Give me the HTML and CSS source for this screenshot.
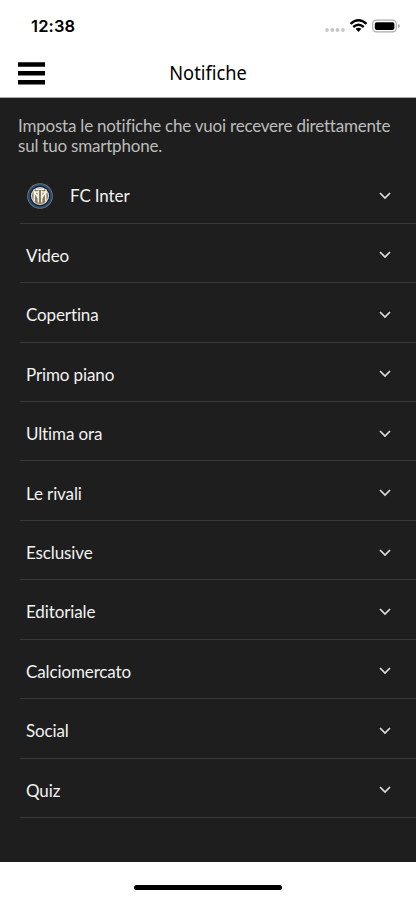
FILE: index.html
```html
<!DOCTYPE html>
<html lang="it">
<head>
<meta charset="utf-8">
<meta name="viewport" content="width=device-width">
<title>Notifiche</title>
<link rel="stylesheet" href="styles.css">
</head>
<body>
<div class="status">
  <span class="time">12:38</span>
  <svg class="indicators" width="78" height="16" viewBox="0 0 78 16">
    <g fill="#c7c7c7"><circle cx="4" cy="12" r="1.9"/><circle cx="9.3" cy="12" r="1.9"/><circle cx="14.6" cy="12" r="1.9"/><circle cx="19.9" cy="12" r="1.9"/></g>
    <g fill="none" stroke="#000" stroke-width="2.4"><path d="M27.5 5.8Q35.5-1.2 43.5 5.8"/><path d="M30.2 9Q35.5 4.6 40.8 9"/></g>
    <path d="M32.6 10.8Q35.5 8.8 38.4 10.8L35.5 13.9Z"/>
    <rect x="49.7" y="2.2" width="23.6" height="11.6" rx="3.6" fill="#fff" stroke="#aaa" stroke-width="1.2"/>
    <rect x="51.8" y="4.2" width="19.6" height="7.7" rx="1.8"/>
    <path d="M75 6Q77 6.5 77 8T75 10Z" fill="#aaa"/>
  </svg>
</div>
<header class="bar">
  <svg class="menu" width="27" height="23" viewBox="0 0 27 23"><path d="M0 .2h27v4.5H0zM0 9.1h27v4.5H0zM0 18h27v4.5H0z"/></svg>
  <h1>Notifiche</h1>
</header>
<main>
  <p class="intro">Imposta le notifiche che vuoi recevere direttamente<br>sul tuo smartphone.</p>
  <ul>
    <li>
      <svg class="crest" width="26" height="26" viewBox="0 0 26 26">
        <circle cx="13" cy="13" r="12.8" fill="#817b6d"/><circle cx="13" cy="13" r="12.1" fill="#294f7d"/>
        <circle cx="13" cy="13" r="10.3" fill="#151d29"/><circle cx="13" cy="13" r="9" fill="#eee9dc"/>
        <circle cx="13" cy="13" r="8" fill="#84755a"/>
        <path d="M7.3 18.5V8.5l4.2 7M18.7 18.5V8.5l-4.2 7M11.3 7.5v12M14.7 7.5v12M6.5 9h5M15 9h5M9 6.3h8" fill="none" stroke="#f4f0e6" stroke-width="1.5"/>
      </svg>
      <span>FC Inter</span><svg class="chev" width="12" height="8" viewBox="0 0 12 8"><path d="M1 1l5 5 5-5"/></svg></li>
    <li><span>Video</span><svg class="chev" width="12" height="8" viewBox="0 0 12 8"><path d="M1 1l5 5 5-5"/></svg></li>
    <li><span>Copertina</span><svg class="chev" width="12" height="8" viewBox="0 0 12 8"><path d="M1 1l5 5 5-5"/></svg></li>
    <li><span>Primo piano</span><svg class="chev" width="12" height="8" viewBox="0 0 12 8"><path d="M1 1l5 5 5-5"/></svg></li>
    <li><span>Ultima ora</span><svg class="chev" width="12" height="8" viewBox="0 0 12 8"><path d="M1 1l5 5 5-5"/></svg></li>
    <li><span>Le rivali</span><svg class="chev" width="12" height="8" viewBox="0 0 12 8"><path d="M1 1l5 5 5-5"/></svg></li>
    <li><span>Esclusive</span><svg class="chev" width="12" height="8" viewBox="0 0 12 8"><path d="M1 1l5 5 5-5"/></svg></li>
    <li><span>Editoriale</span><svg class="chev" width="12" height="8" viewBox="0 0 12 8"><path d="M1 1l5 5 5-5"/></svg></li>
    <li><span>Calciomercato</span><svg class="chev" width="12" height="8" viewBox="0 0 12 8"><path d="M1 1l5 5 5-5"/></svg></li>
    <li><span>Social</span><svg class="chev" width="12" height="8" viewBox="0 0 12 8"><path d="M1 1l5 5 5-5"/></svg></li>
    <li><span>Quiz</span><svg class="chev" width="12" height="8" viewBox="0 0 12 8"><path d="M1 1l5 5 5-5"/></svg></li>
  </ul>
</main>
<footer><div class="home"></div></footer>
</body>
</html>
```
FILE: styles.css
```css
* { box-sizing: border-box; margin: 0; padding: 0; }
body {
  width: 416px;
  height: 900px;
  display: flex;
  flex-direction: column;
  overflow: hidden;
  background: #fff;
  font-family: Lato, sans-serif;
}
svg { display: block; flex: none; }
.status {
  height: 49px;
  padding: 3px 15px 0 31px;
  display: flex;
  align-items: center;
  justify-content: space-between;
}
.time { font: 600 16.5px/20px Inter, sans-serif; letter-spacing: .15px; }
.bar {
  height: 49px;
  padding: 0 18px;
  display: grid;
  grid-template-columns: 27px 1fr 27px;
  align-items: center;
  border-bottom: 1px solid #aaa;
}
h1 {
  font: 400 19px/26px "Noto Sans", sans-serif;
  text-align: center;
  transform: scaleX(.96);
}
main { height: 764px; background: #1e1e1e; }
.intro {
  padding: 18px 18px 0;
  height: 66.2px;
  font-size: 17px;
  line-height: 20px;
  letter-spacing: -.21px;
  color: #bdbdbd;
  white-space: nowrap;
}
ul { list-style: none; padding-left: 20px; }
li {
  height: 59.45px;
  padding: 6px 25px 0 6px;
  display: flex;
  align-items: center;
  border-bottom: 1px solid #383838;
  color: #f2f2f2;
  font-size: 17px;
  line-height: 22px;
  letter-spacing: -.12px;
}
.crest { margin: -1px 17px 0 1px; }
.chev { margin: -1px 0 0 auto; fill: none; stroke: #ddd; stroke-width: 1.7; }
footer { flex: 1; display: flex; justify-content: center; padding-top: 23px; }
.home { width: 148px; height: 5px; border-radius: 3px; background: #000; }
```
